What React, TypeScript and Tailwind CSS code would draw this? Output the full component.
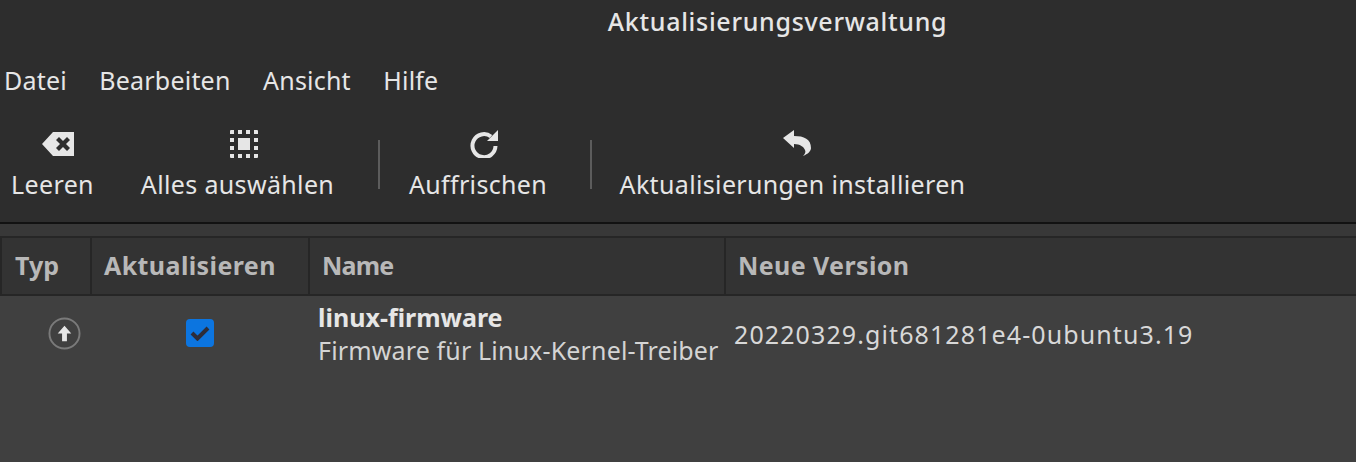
export default function App() {
  return (
    <div className="h-[462px] w-[1356px] overflow-hidden bg-[#2d2d2d] font-['Noto_Sans',sans-serif] text-[#e6e6e6]">
      <div className="flex h-[44px] items-center justify-center pl-[199px] text-[25px] font-medium tracking-[0.7px]">
        Aktualisierungsverwaltung
      </div>
      <nav className="flex h-[74px] items-center gap-[32.500px] pl-[4px] text-[25px] tracking-[0.2px]">
        <span>Datei</span>
        <span>Bearbeiten</span>
        <span>Ansicht</span>
        <span>Hilfe</span>
      </nav>
      <div className="flex h-[106px] items-start border-b-2 border-[#121212] text-[25px] tracking-[0.35px]">
        <ToolButton label="Leeren" className="ml-[12px] w-[81px]">
          <svg className="mr-[2px] mb-[2px]" width="32" height="24" viewBox="0 0 32 24">
            <path fillRule="evenodd" fill="#e6e6e6" d="M11 0h21v24H11L0 12zM14 8l4 4-4 4 3 3 4-4 4 4 3-3-4-4 4-4-3-3-4 4-4-4z" />
          </svg>
        </ToolButton>
        <ToolButton label="Alles auswählen" className="ml-[47px] w-[195px]">
          <svg width="28" height="28" viewBox="0 0 28 28" fill="#e6e6e6">
            <rect x="8" y="8" width="12" height="12" />
            <path d="M0 1a1 1 0 0 1 1-1h3v4H0zM8 0h4v4H8zM16 0h4v4h-4zM24 0h3a1 1 0 0 1 1 1v3h-4zM0 8h4v4H0zM24 8h4v4h-4zM0 16h4v4H0zM24 16h4v4h-4zM0 24h4v4H1a1 1 0 0 1-1-1zM8 24h4v4H8zM16 24h4v4h-4zM24 24h4v3a1 1 0 0 1-1 1h-3z" />
          </svg>
        </ToolButton>
        <div className="mt-[22px] ml-[43px] h-[49px] w-[2px] bg-[#5c5c5c]" />
        <ToolButton label="Auffrischen" className="ml-[28px] w-[140px]">
          <svg width="28" height="28" viewBox="0 0 28 28" fill="none">
            <path d="M21 6.500A11.500 11.500 0 1 0 25.500 16" stroke="#e6e6e6" strokeWidth="4" />
            <path d="M17 11L28 0v11z" fill="#e6e6e6" />
          </svg>
        </ToolButton>
        <div className="mt-[22px] ml-[42px] h-[49px] w-[2px] bg-[#5c5c5c]" />
        <ToolButton label="Aktualisierungen installieren" className="ml-[28px] w-[345px]">
          <svg className="mr-[4px] mb-[2px]" width="28" height="26" viewBox="0 0 28 26">
            <path fill="#e6e6e6" d="M0 8L11 0v6c10 0 17 3 17 12 0 3-3 6-8 8 2-2 3-4 2-6-1-3-5-6-11-6v4z" />
          </svg>
        </ToolButton>
      </div>
      <div className="h-[12px] bg-[#383838]" />
      <div className="h-[226px] bg-[#404040]">
        <div className="flex h-[60px] border-y-2 border-[#262626] bg-[#333333] text-[25px] font-bold text-[#b8b8b8]">
          <div className="flex w-[92px] items-center border-x-2 border-[#262626] pl-[13px]">Typ</div>
          <div className="flex w-[218px] items-center border-r-2 border-[#262626] pl-[12px] tracking-[0.4px]">Aktualisieren</div>
          <div className="flex w-[416px] items-center border-r-2 border-[#262626] pl-[12px] tracking-[-0.8px]">Name</div>
          <div className="flex flex-1 items-center pl-[12px] tracking-[0.4px]">Neue Version</div>
        </div>
        <div className="flex pt-[5px]">
          <div className="flex w-[129px] justify-center pt-[16px]">
            <svg width="33" height="33" viewBox="0 0 34 34">
              <circle cx="17" cy="17" r="15.500" fill="none" stroke="#7a7a7a" strokeWidth="2" />
              <path fill="#e6e6e6" d="M17 9l7 8h-4.500v8h-5v-8H10z" />
            </svg>
          </div>
          <div className="flex w-[141px] justify-center pt-[18px]">
            <div className="flex h-[28px] w-[28px] items-center justify-center rounded-[4px] bg-[#0c75e0]">
              <svg width="20" height="16" viewBox="0 0 20 16" fill="none">
                <path d="M2 8l5.500 5.500L18 3" stroke="#2d2d3a" strokeWidth="4" />
              </svg>
            </div>
          </div>
          <div className="w-[464px] pl-[48px] text-[25px] leading-[33px]">
            <div className="font-bold">linux-firmware</div>
            <div className="whitespace-nowrap tracking-[0.15px] text-[#d4d4d4]">Firmware für Linux-Kernel-Treiber</div>
          </div>
          <div className="pt-[15px] text-[25px] tracking-[1.1px] text-[#d8d8d8]">20220329.git681281e4-0ubuntu3.19</div>
        </div>
      </div>
    </div>
  )
}

function ToolButton({ label, className, children }: { label: string; className: string; children: React.ReactNode }) {
  return (
    <div className={`flex flex-col items-center ${className}`}>
      <div className="ml-[12px] flex h-[40px] items-end">{children}</div>
      <span className="mt-[10px] whitespace-nowrap leading-[33px]">{label}</span>
    </div>
  )
}
